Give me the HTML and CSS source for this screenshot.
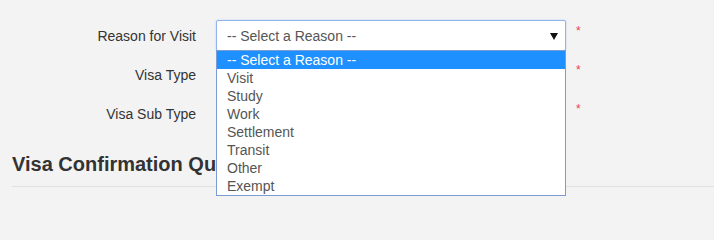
FILE: index.html
```html
<!DOCTYPE html>
<html>
<head>
<meta charset="utf-8">
<link rel="stylesheet" href="styles.css">
</head>
<body>
<div class="page">
  <form class="form">
    <div class="row">
      <label class="label">Reason for Visit</label>
      <div class="field">
        <div class="select focus">
          <span class="value">-- Select a Reason --</span>
          <span class="arrow"></span>
        </div>
        <ul class="dropdown">
          <li class="opt selected">-- Select a Reason --</li>
          <li class="opt">Visit</li>
          <li class="opt">Study</li>
          <li class="opt">Work</li>
          <li class="opt">Settlement</li>
          <li class="opt">Transit</li>
          <li class="opt">Other</li>
          <li class="opt">Exempt</li>
        </ul>
      </div>
      <span class="req">*</span>
    </div>
    <div class="row">
      <label class="label">Visa Type</label>
      <div class="field"><div class="select"></div></div>
      <span class="req">*</span>
    </div>
    <div class="row">
      <label class="label">Visa Sub Type</label>
      <div class="field"><div class="select"></div></div>
      <span class="req">*</span>
    </div>
  </form>
  <h2 class="heading">Visa Confirmation Questions</h2>
</div>
</body>
</html>
```

FILE: styles.css
```css
html {
  height: 207px;
  overflow: hidden;
  background: #f3f3f3;
}
body {
  margin: 0;
  padding: 0;
  min-height: 207px;
  background: #f3f3f3;
  font-family: "Liberation Sans", Arial, sans-serif;
  font-size: 14px;
  color: #333;
}
.page {
  padding: 20px 0 0 12px;
}
.form {
  display: flex;
  flex-direction: column;
  gap: 8px;
}
.row {
  display: grid;
  grid-template-columns: 184px 350px auto;
  column-gap: 20px;
  align-items: center;
  height: 31px;
}
.label {
  text-align: right;
  color: #333;
}
.field {
  position: relative;
  height: 31px;
}
.select {
  box-sizing: border-box;
  height: 31px;
  border: 1px solid #f3f3f3;
  display: flex;
  align-items: center;
  padding: 0 7px 0 10px;
  color: #555;
}
.select.focus {
  background: #fff;
  border: 1px solid #8fb4f0;
  border-radius: 2px;
  box-shadow: 0 0 2px rgba(102, 150, 233, 0.4);
}
.value {
  flex: 1;
}
.arrow {
  width: 0;
  height: 0;
  border-left: 4px solid transparent;
  border-right: 4px solid transparent;
  border-top: 7px solid #111;
  margin-top: 2px;
}
.dropdown {
  position: absolute;
  left: 0;
  top: 30px;
  width: 350px;
  box-sizing: border-box;
  margin: 0;
  padding: 0;
  list-style: none;
  background: #fff;
  border: 1px solid #7a9cd3;
  z-index: 5;
}
.opt {
  height: 18px;
  line-height: 18px;
  padding-left: 10px;
  color: #555;
  font-size: 14px;
}
.opt.selected {
  background: #1e90ff;
  color: #fff;
}
.req {
  color: #e8434b;
  font-size: 12px;
  align-self: start;
  margin-top: 4px;
  margin-left: -10px;
}
.heading {
  margin: 24px 0 0 0;
  font-size: 20px;
  line-height: 22px;
  font-weight: bold;
  color: #333;
  padding-bottom: 11px;
  border-bottom: 1px solid #e0e0e0;
}
```
